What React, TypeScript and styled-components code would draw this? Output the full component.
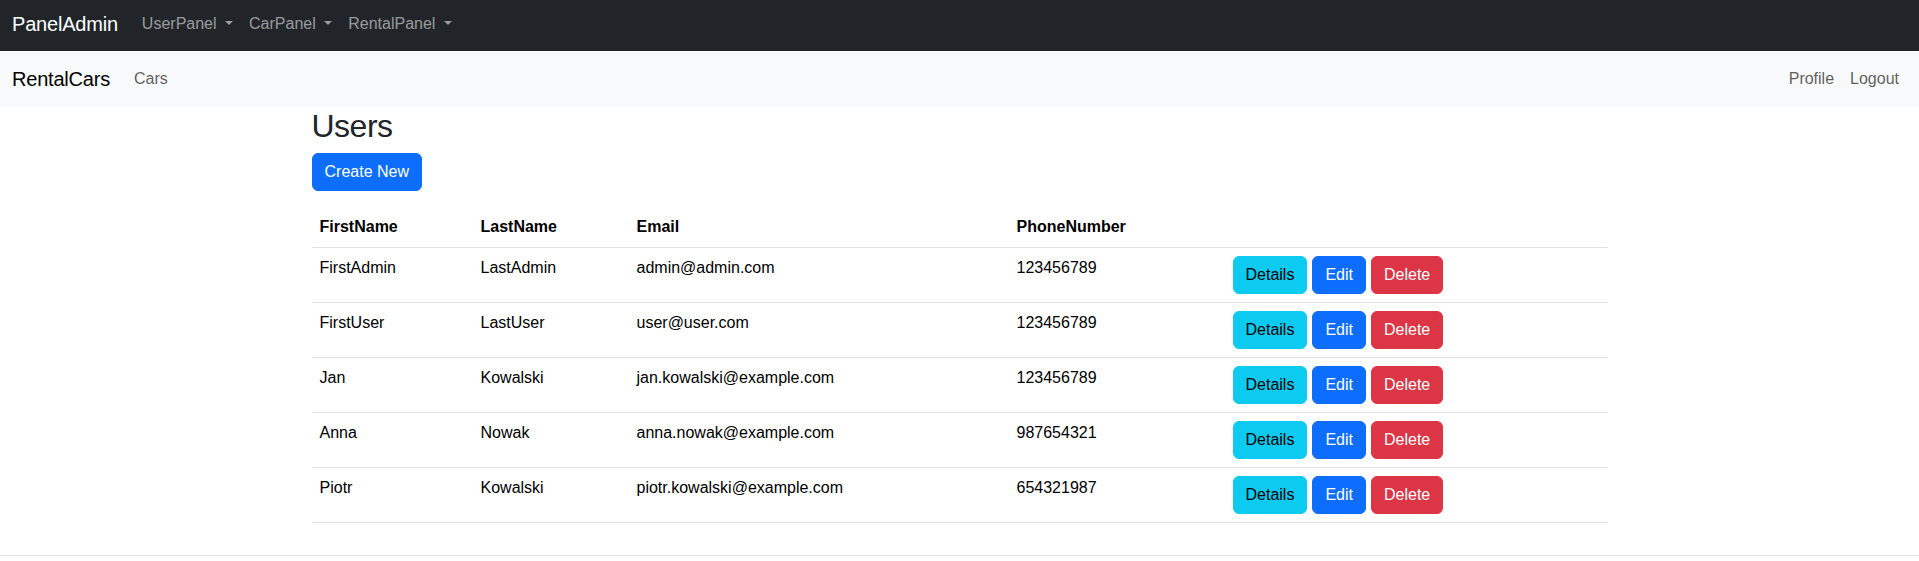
import React from "react";
import styled, { createGlobalStyle, css } from "styled-components";

const GlobalStyle = createGlobalStyle`
  *, *::before, *::after { box-sizing: border-box; }
  html, body { margin: 0; padding: 0; }
  body {
    font-family: "Liberation Sans", Arial, sans-serif;
    font-size: 16px;
    line-height: 1.5;
    color: #212529;
    background: #fff;
  }
`;

const NavBar = styled.nav<{ $dark?: boolean }>`
  display: flex;
  align-items: center;
  justify-content: space-between;
  height: ${(p) => (p.$dark ? "51px" : "56px")};
  padding: ${(p) => (p.$dark ? "0 12px 3px" : "0 12px")};
  background: ${(p) => (p.$dark ? "#212529" : "#f8f9fa")};
`;

const NavGroup = styled.div`
  display: flex;
  align-items: center;
`;

const Brand = styled.a<{ $dark?: boolean }>`
  font-size: 20px;
  line-height: 30px;
  margin-right: 16px;
  color: ${(p) => (p.$dark ? "#fff" : "#000")};
  text-decoration: none;
  letter-spacing: -0.2px;
`;

const NavList = styled.ul`
  display: flex;
  list-style: none;
  margin: 0;
  padding: 0;
`;

const NavLink = styled.a<{ $dark?: boolean; $toggle?: boolean }>`
  display: block;
  padding: 0 8px;
  line-height: 24px;
  font-size: 16px;
  color: ${(p) => (p.$dark ? "rgba(255,255,255,0.55)" : "rgba(0,0,0,0.65)")};
  text-decoration: none;
  ${(p) =>
    p.$toggle &&
    css`
      &::after {
        content: "";
        display: inline-block;
        margin-left: 8.5px;
        vertical-align: 0.255em;
        border-top: 0.3em solid;
        border-right: 0.3em solid transparent;
        border-left: 0.3em solid transparent;
        border-bottom: 0;
      }
    `}
`;

const Main = styled.main`
  max-width: 1320px;
  margin: 0 auto;
  padding: 0 12px 16px;
`;

const Title = styled.h1`
  margin: 0 0 8px;
  font-size: 32px;
  font-weight: 500;
  line-height: 1.2;
  color: #212529;
  letter-spacing: -0.5px;
`;

const Toolbar = styled.div`
  display: flex;
  margin-bottom: 16px;
`;

const variants = {
  primary: { bg: "#0d6efd", fg: "#fff" },
  info: { bg: "#0dcaf0", fg: "#000" },
  danger: { bg: "#dc3545", fg: "#fff" },
};

const Button = styled.a<{ $variant: keyof typeof variants }>`
  display: inline-block;
  padding: 6px 12px;
  font-size: 16px;
  line-height: 24px;
  border: 1px solid ${(p) => variants[p.$variant].bg};
  border-radius: 6px;
  background: ${(p) => variants[p.$variant].bg};
  color: ${(p) => variants[p.$variant].fg};
  text-decoration: none;
  white-space: nowrap;
  cursor: pointer;
`;

const Table = styled.table`
  width: 100%;
  table-layout: fixed;
  border-collapse: collapse;
  margin-bottom: 16px;
  color: #000;
  vertical-align: top;
`;

const HeadCell = styled.th`
  padding: 8px;
  text-align: left;
  font-weight: 700;
  border-bottom: 1px solid #dee2e6;
  vertical-align: bottom;
`;

const Cell = styled.td`
  padding: 8px;
  border-bottom: 1px solid #dee2e6;
  vertical-align: top;
`;

const Actions = styled.div`
  display: flex;
  gap: 5px;
`;

const Footer = styled.footer`
  border-top: 1px solid #dee2e6;
  height: 60px;
`;

const columns = [
  { key: "FirstName", width: 161 },
  { key: "LastName", width: 156 },
  { key: "Email", width: 380 },
  { key: "PhoneNumber", width: 216 },
  { key: "", width: 383 },
];

const users = [
  { first: "FirstAdmin", last: "LastAdmin", email: "admin@admin.com", phone: "123456789" },
  { first: "FirstUser", last: "LastUser", email: "user@user.com", phone: "123456789" },
  { first: "Jan", last: "Kowalski", email: "jan.kowalski@example.com", phone: "123456789" },
  { first: "Anna", last: "Nowak", email: "anna.nowak@example.com", phone: "987654321" },
  { first: "Piotr", last: "Kowalski", email: "piotr.kowalski@example.com", phone: "654321987" },
];

export default function App() {
  return (
    <>
      <GlobalStyle />
      <NavBar $dark>
        <NavGroup>
          <Brand $dark href="#">PanelAdmin</Brand>
          <NavList>
            <li><NavLink $dark $toggle href="#">UserPanel</NavLink></li>
            <li><NavLink $dark $toggle href="#">CarPanel</NavLink></li>
            <li><NavLink $dark $toggle href="#">RentalPanel</NavLink></li>
          </NavList>
        </NavGroup>
      </NavBar>
      <NavBar>
        <NavGroup>
          <Brand href="#">RentalCars</Brand>
          <NavList>
            <li><NavLink href="#">Cars</NavLink></li>
          </NavList>
        </NavGroup>
        <NavList>
          <li><NavLink href="#">Profile</NavLink></li>
          <li><NavLink href="#">Logout</NavLink></li>
        </NavList>
      </NavBar>
      <Main>
        <Title>Users</Title>
        <Toolbar>
          <Button $variant="primary" href="#">Create New</Button>
        </Toolbar>
        <Table>
          <colgroup>
            {columns.map((c, i) => (
              <col key={i} style={{ width: c.width }} />
            ))}
          </colgroup>
          <thead>
            <tr>
              {columns.map((c, i) => (
                <HeadCell key={i}>{c.key}</HeadCell>
              ))}
            </tr>
          </thead>
          <tbody>
            {users.map((u) => (
              <tr key={u.email}>
                <Cell>{u.first}</Cell>
                <Cell>{u.last}</Cell>
                <Cell>{u.email}</Cell>
                <Cell>{u.phone}</Cell>
                <Cell>
                  <Actions>
                    <Button $variant="info" href="#">Details</Button>
                    <Button $variant="primary" href="#">Edit</Button>
                    <Button $variant="danger" href="#">Delete</Button>
                  </Actions>
                </Cell>
              </tr>
            ))}
          </tbody>
        </Table>
      </Main>
      <Footer />
    </>
  );
}
